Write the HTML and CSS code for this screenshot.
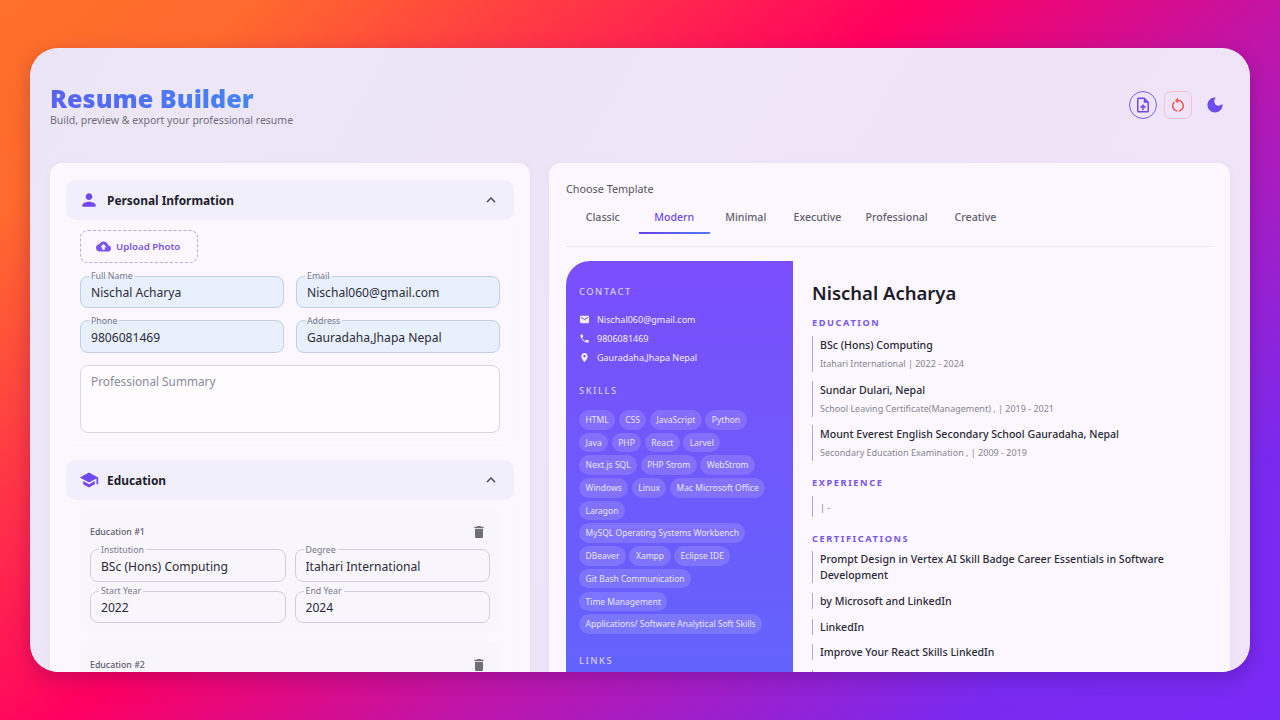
FILE: index.html
```html
<!DOCTYPE html>
<html lang="en">
<head>
    <meta charset="UTF-8">
    <meta name="viewport" content="width=device-width, initial-scale=1.0">
    <title>Resume Builder</title>
    <link rel="stylesheet" href="styles.css">
</head>
<body>
<div class="app">
    <header class="topbar">
        <div>
            <h1>Resume Builder</h1>
            <p class="tagline">Build, preview &amp; export your professional resume</p>
        </div>
        <div class="actions">
            <button class="action action-import" aria-label="Import">
                <svg viewBox="0 0 24 24"><path d="M14 2H6c-1.1 0-1.99.9-1.99 2L4 20c0 1.1.89 2 1.99 2H18c1.1 0 2-.9 2-2V8l-6-6zm4 18H6V4h7v5h5v11zM8 15.01l1.41 1.41L11 14.84V19h2v-4.16l1.59 1.59L16 15.01 12.01 11 8 15.01z"/></svg>
            </button>
            <button class="action action-reset" aria-label="Reset">
                <svg viewBox="0 0 24 24"><path d="M12 5V2L8 6l4 4V7c3.31 0 6 2.69 6 6 0 2.97-2.17 5.43-5 5.91v2.02c3.95-.49 7-3.85 7-7.93 0-4.42-3.58-8-8-8zm-6 8c0-1.65.67-3.15 1.76-4.24L6.34 7.34C4.9 8.79 4 10.79 4 13c0 4.08 3.05 7.44 7 7.93v-2.02c-2.83-.48-5-2.94-5-5.91z"/></svg>
            </button>
            <button class="action action-theme" aria-label="Dark mode">
                <svg viewBox="0 0 24 24"><path d="M12 3c-4.97 0-9 4.03-9 9s4.03 9 9 9 9-4.03 9-9c0-.46-.04-.92-.1-1.36-.98 1.37-2.58 2.26-4.4 2.26-2.98 0-5.4-2.42-5.4-5.4 0-1.81.89-3.42 2.26-4.4-.44-.06-.9-.1-1.36-.1z"/></svg>
            </button>
        </div>
    </header>

    <main class="columns">
        <!-- Form -->
        <section class="panel form-panel">
            <div class="accordion">
                <div class="accordion-head">
                    <svg class="head-icon" viewBox="0 0 24 24"><path d="M12 12c2.21 0 4-1.79 4-4s-1.79-4-4-4-4 1.79-4 4 1.79 4 4 4zm0 2c-2.67 0-8 1.34-8 4v2h16v-2c0-2.66-5.33-4-8-4z"/></svg>
                    <h2>Personal Information</h2>
                    <svg class="chevron" viewBox="0 0 24 24"><path d="M12 8l-6 6 1.41 1.41L12 10.83l4.59 4.58L18 14z"/></svg>
                </div>
                <div class="accordion-body">
                    <button class="upload">
                        <svg viewBox="0 0 24 24"><path d="M19.35 10.04C18.67 6.59 15.64 4 12 4 9.11 4 6.6 5.64 5.35 8.04 2.34 8.36 0 10.91 0 14c0 3.31 2.69 6 6 6h13c2.76 0 5-2.24 5-5 0-2.64-2.05-4.78-4.65-4.96zM14 13v4h-4v-4H7l5-5 5 5h-3z"/></svg>
                        Upload Photo
                    </button>
                    <div class="field-grid personal-grid">
                        <fieldset class="field filled"><legend>Full Name</legend><input value="Nischal Acharya"></fieldset>
                        <fieldset class="field filled"><legend>Email</legend><input value="Nischal060@gmail.com"></fieldset>
                        <fieldset class="field filled"><legend>Phone</legend><input value="9806081469"></fieldset>
                        <fieldset class="field filled"><legend>Address</legend><input value="Gauradaha,Jhapa Nepal"></fieldset>
                    </div>
                    <textarea class="summary" placeholder="Professional Summary"></textarea>
                </div>
            </div>

            <div class="accordion">
                <div class="accordion-head">
                    <svg class="head-icon" viewBox="0 0 24 24"><path d="M5 13.18v4L12 21l7-3.82v-4L12 17l-7-3.82zM12 3L1 9l11 6 9-4.91V17h2V9L12 3z"/></svg>
                    <h2>Education</h2>
                    <svg class="chevron" viewBox="0 0 24 24"><path d="M12 8l-6 6 1.41 1.41L12 10.83l4.59 4.58L18 14z"/></svg>
                </div>
                <div class="accordion-body entries">
                    <div class="entry">
                        <div class="entry-head">
                            <span>Education #1</span>
                            <svg viewBox="0 0 24 24"><path d="M6 19c0 1.1.9 2 2 2h8c1.1 0 2-.9 2-2V7H6v12zM19 4h-3.5l-1-1h-5l-1 1H5v2h14V4z"/></svg>
                        </div>
                        <div class="field-grid entry-grid">
                            <fieldset class="field"><legend>Institution</legend><input value="BSc (Hons) Computing"></fieldset>
                            <fieldset class="field"><legend>Degree</legend><input value="Itahari International"></fieldset>
                            <fieldset class="field"><legend>Start Year</legend><input value="2022"></fieldset>
                            <fieldset class="field"><legend>End Year</legend><input value="2024"></fieldset>
                        </div>
                    </div>
                    <div class="entry">
                        <div class="entry-head">
                            <span>Education #2</span>
                            <svg viewBox="0 0 24 24"><path d="M6 19c0 1.1.9 2 2 2h8c1.1 0 2-.9 2-2V7H6v12zM19 4h-3.5l-1-1h-5l-1 1H5v2h14V4z"/></svg>
                        </div>
                    </div>
                </div>
            </div>
        </section>

        <!-- Preview -->
        <section class="panel preview-panel">
            <p class="choose">Choose Template</p>
            <nav class="tabs">
                <a class="tab">Classic</a>
                <a class="tab active">Modern</a>
                <a class="tab">Minimal</a>
                <a class="tab">Executive</a>
                <a class="tab">Professional</a>
                <a class="tab">Creative</a>
            </nav>

            <div class="resume">
                <aside class="sidebar">
                    <h4 class="side-title">Contact</h4>
                    <ul class="contact">
                        <li><svg viewBox="0 0 24 24"><path d="M20 4H4c-1.1 0-1.99.9-1.99 2L2 18c0 1.1.9 2 2 2h16c1.1 0 2-.9 2-2V6c0-1.1-.9-2-2-2zm0 4l-8 5-8-5V6l8 5 8-5v2z"/></svg>Nischal060@gmail.com</li>
                        <li><svg viewBox="0 0 24 24"><path d="M6.62 10.79c1.44 2.83 3.76 5.14 6.59 6.59l2.2-2.2c.27-.27.67-.36 1.02-.24 1.12.37 2.33.57 3.57.57.55 0 1 .45 1 1V20c0 .55-.45 1-1 1-9.39 0-17-7.61-17-17 0-.55.45-1 1-1h3.5c.55 0 1 .45 1 1 0 1.25.2 2.45.57 3.57.11.35.03.74-.25 1.02l-2.2 2.2z"/></svg>9806081469</li>
                        <li><svg viewBox="0 0 24 24"><path d="M12 2C8.13 2 5 5.13 5 9c0 5.25 7 13 7 13s7-7.75 7-13c0-3.87-3.13-7-7-7zm0 9.5c-1.38 0-2.5-1.12-2.5-2.5s1.12-2.5 2.5-2.5 2.5 1.12 2.5 2.5-1.12 2.5-2.5 2.5z"/></svg>Gauradaha,Jhapa Nepal</li>
                    </ul>
                    <h4 class="side-title">Skills</h4>
                    <div class="chips">
                        <span class="chip">HTML</span>
                        <span class="chip">CSS</span>
                        <span class="chip">JavaScript</span>
                        <span class="chip">Python</span>
                        <span class="chip">Java</span>
                        <span class="chip">PHP</span>
                        <span class="chip">React</span>
                        <span class="chip">Larvel</span>
                        <span class="chip">Next.js SQL</span>
                        <span class="chip">PHP Strom</span>
                        <span class="chip">WebStrom</span>
                        <span class="chip">Windows</span>
                        <span class="chip">Linux</span>
                        <span class="chip">Mac Microsoft Office</span>
                        <span class="chip">Laragon</span>
                        <span class="chip">MySQL Operating Systems Workbench</span>
                        <span class="chip">DBeaver</span>
                        <span class="chip">Xampp</span>
                        <span class="chip">Eclipse IDE</span>
                        <span class="chip">Git Bash Communication</span>
                        <span class="chip">Time Management</span>
                        <span class="chip">Applications/ Software Analytical Soft Skills</span>
                    </div>
                    <h4 class="side-title">Links</h4>
                </aside>

                <div class="resume-main">
                    <h3 class="person">Nischal Acharya</h3>

                    <h4 class="main-title">Education</h4>
                    <div class="item">
                        <div class="item-title">BSc (Hons) Computing</div>
                        <div class="item-sub">Itahari International | 2022 - 2024</div>
                    </div>
                    <div class="item">
                        <div class="item-title">Sundar Dulari, Nepal</div>
                        <div class="item-sub">School Leaving Certificate(Management) , | 2019 - 2021</div>
                    </div>
                    <div class="item">
                        <div class="item-title">Mount Everest English Secondary School Gauradaha, Nepal</div>
                        <div class="item-sub">Secondary Education Examination , | 2009 - 2019</div>
                    </div>

                    <h4 class="main-title">Experience</h4>
                    <div class="item item-empty">
                        <div class="item-sub">| -</div>
                    </div>

                    <h4 class="main-title">Certifications</h4>
                    <div class="item cert">
                        <div class="item-title">Prompt Design in Vertex AI Skill Badge Career Essentials in Software Development</div>
                    </div>
                    <div class="item cert">
                        <div class="item-title">by Microsoft and LinkedIn</div>
                    </div>
                    <div class="item cert">
                        <div class="item-title">LinkedIn</div>
                    </div>
                    <div class="item cert">
                        <div class="item-title">Improve Your React Skills LinkedIn</div>
                    </div>
                    <div class="item cert">
                        <div class="item-title">&nbsp;</div>
                    </div>
                </div>
            </div>
        </section>
    </main>
</div>
</body>
</html>
```

FILE: styles.css
```css
* {
    margin: 0;
    padding: 0;
    box-sizing: border-box;
    font-family: 'Noto Sans', sans-serif;
}

body {
    height: 720px;
    overflow: hidden;
    padding: 48px 30px;
    background: linear-gradient(140deg, #ff702a 0%, #ff6a2d 12%, #ff0060 43%, #c015a8 61%, #7a2af0 85%, #7a2af5 100%);
}

.app {
    height: 624px;
    overflow: hidden;
    border-radius: 28px;
    padding: 0 20px;
    background: linear-gradient(120deg, #ebe6f5 0%, #f1e3f8 100%);
    box-shadow: 0 6px 20px rgba(40, 0, 80, 0.25);
}

svg {
    display: block;
    fill: currentColor;
    flex-shrink: 0;
}

/* Top bar */
.topbar {
    display: flex;
    justify-content: space-between;
    align-items: center;
    height: 115px;
    padding-bottom: 2px;
}

h1 {
    font-size: 25.2px;
    line-height: 30px;
    font-weight: 900;
    background: linear-gradient(90deg, #5b63f5, #3f8df5);
    -webkit-background-clip: text;
    background-clip: text;
    color: transparent;
}

.tagline {
    font-size: 10.5px;
    line-height: 14px;
    color: #6e6e80;
}

.actions {
    display: flex;
    align-items: center;
    gap: 7px;
    padding-right: 1px;
}

.action {
    display: flex;
    align-items: center;
    justify-content: center;
    width: 28px;
    height: 28px;
    background: transparent;
    border: 1px solid transparent;
}

.action svg {
    width: 18px;
    height: 18px;
}

.action-import {
    border-color: #7c5cf0;
    border-radius: 50%;
    color: #6d4cf0;
}

.action-reset {
    border-color: #f3c3d3;
    border-radius: 7px;
    color: #ef5350;
}

.action-theme {
    color: #6d4cf0;
    margin-left: 2px;
}

.action-theme svg {
    width: 20px;
    height: 20px;
}

/* Panels */
.columns {
    display: grid;
    grid-template-columns: 480px 681px;
    gap: 19px;
}

.panel {
    height: 520px;
    background: #fcf7fe;
    border-radius: 12px;
    box-shadow: 0 2px 8px rgba(90, 70, 160, 0.05);
}

.form-panel {
    padding: 17px 16px;
}

.accordion {
    margin-bottom: 14px;
}

.accordion-head {
    display: flex;
    align-items: center;
    height: 40px;
    padding: 0 14px 0 13px;
    background: #f1effc;
    border-radius: 10px;
}

.accordion-head h2 {
    flex: 1;
    font-size: 11.9px;
    font-weight: 700;
    color: #1d1d2b;
    margin-left: 8px;
}

.head-icon {
    width: 20px;
    height: 20px;
    color: #7048f0;
}

.chevron {
    width: 18px;
    height: 18px;
    color: #444452;
}

.accordion-body {
    padding: 10px 13px 12px;
    border: 1px solid #f9f5fd;
    border-top: none;
    border-radius: 0 0 10px 10px;
}

.upload {
    display: flex;
    align-items: center;
    gap: 5px;
    width: 118px;
    height: 33px;
    padding-left: 15px;
    background: transparent;
    border: 1px dashed #b9a8e6;
    border-radius: 8px;
    color: #7a55ea;
    font-size: 9.7px;
    font-weight: 600;
}

.upload svg {
    width: 15px;
    height: 15px;
}

.field-grid {
    display: grid;
    grid-template-columns: 1fr 1fr;
    gap: 7.5px 12px;
}

.personal-grid {
    margin-top: 8px;
}

.entry-grid {
    gap: 4.5px 9px;
}

.field {
    height: 37px;
    padding: 0 10px;
    border: 1px solid #cfcfdc;
    border-radius: 8px;
}

.field.filled {
    background: #e8f0fe;
    border-color: #c3cfe0;
}

.field legend {
    margin-left: -2px;
    padding: 0 2px;
    font-size: 8.8px;
    line-height: 10px;
    color: #77778a;
}

.field input {
    display: block;
    width: 100%;
    height: 23px;
    border: none;
    outline: none;
    background: transparent;
    font-size: 12.1px;
    color: #2b2b38;
}

.summary {
    display: block;
    width: 100%;
    height: 68px;
    margin-top: 12px;
    padding: 7px 10px;
    border: 1px solid #d6d6e0;
    border-radius: 8px;
    background: #fefcff;
    font-size: 11.8px;
    resize: none;
    outline: none;
}

.summary::placeholder {
    color: #8a8a98;
}

.entries {
    padding-top: 9px;
}

.entry {
    padding: 10px;
    margin-bottom: 9px;
    background: #f8f5fd;
    border-radius: 9px;
}

.entry-head {
    display: flex;
    justify-content: space-between;
    align-items: center;
    height: 26px;
    font-size: 8.8px;
    font-weight: 500;
    color: #5c5c6c;
}

.entry-head svg {
    width: 16px;
    height: 16px;
    margin-right: 3px;
    color: #6f6f7a;
}

/* Preview */
.preview-panel {
    padding: 18px 16px 0 17px;
    overflow: hidden;
}

.choose {
    font-size: 10.8px;
    line-height: 16px;
    color: #55555f;
}

.tabs {
    display: flex;
    height: 50px;
    padding-left: 1px;
    border-bottom: 1px solid #ebe8f2;
    margin-bottom: 14px;
}

.tab {
    height: 37px;
    min-width: 71.5px;
    padding: 10px 12px 0;
    text-align: center;
    font-size: 10.6px;
    line-height: 20px;
    font-weight: 500;
    color: #60606c;
    border-bottom: 2px solid transparent;
}

.tab.active {
    color: #7048f0;
    border-image: linear-gradient(90deg, #6a3ff0, #4f7cf5) 1;
}

.resume {
    display: flex;
}

.sidebar {
    width: 227px;
    height: 420px;
    flex-shrink: 0;
    padding: 24px 13px 0;
    border-top-left-radius: 24px;
    background: linear-gradient(180deg, #7a4ffb 0%, #6363fd 100%);
    color: #fff;
}

.side-title {
    font-size: 9.4px;
    line-height: 14px;
    font-weight: 500;
    letter-spacing: 1.5px;
    text-transform: uppercase;
    color: #d4cbfb;
}

.contact {
    list-style: none;
    margin: 11px 0 17px;
}

.contact li {
    display: flex;
    align-items: center;
    gap: 7px;
    height: 19px;
    font-size: 9px;
    color: #f1edff;
}

.contact svg {
    width: 11px;
    height: 11px;
}

.chips {
    display: flex;
    flex-wrap: wrap;
    gap: 3.2px 3.5px;
    margin: 12px 0 20px;
    padding-right: 10px;
}

.chip {
    height: 19.5px;
    padding: 0 6.5px;
    border-radius: 10px;
    background: rgba(255, 255, 255, 0.14);
    font-size: 8.5px;
    line-height: 19.5px;
    color: #e8e4ff;
}

.resume-main {
    flex: 1;
    padding: 18px 20px 0 19px;
}

.person {
    margin-bottom: 3px;
    font-size: 18.5px;
    line-height: 28px;
    font-weight: 600;
    color: #1c1c28;
}

.main-title {
    padding-top: 6.4px;
    margin-bottom: 5.5px;
    font-size: 9.2px;
    line-height: 14px;
    font-weight: 700;
    letter-spacing: 1.6px;
    text-transform: uppercase;
    color: #7a55ea;
}

.item {
    padding-left: 7px;
    margin-bottom: 8.7px;
    border-left: 1.5px solid #b59fe9;
}

.item-title {
    font-size: 10.6px;
    line-height: 18px;
    font-weight: 500;
    color: #2a2a36;
}

.item-sub {
    padding-top: 2px;
    font-size: 9px;
    line-height: 16px;
    color: #85858f;
}

.item-empty {
    padding-top: 2px;
    padding-bottom: 1px;
}

.cert {
    margin-bottom: 9.6px;
}

.cert .item-title {
    line-height: 16px;
}
```
